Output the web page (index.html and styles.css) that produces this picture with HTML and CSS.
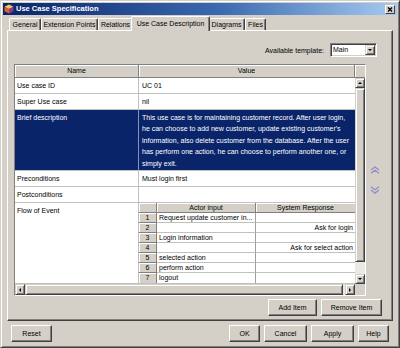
FILE: index.html
```html
<!DOCTYPE html>
<html>
<head>
<meta charset="utf-8">
<title>Use Case Specification</title>
<link rel="stylesheet" href="styles.css">
</head>
<body>
<div class="window">
  <div class="titlebar">
    <svg class="app-icon" viewBox="0 0 10 10" width="10" height="10">
      <path d="M5 0.5 L9.5 2.8 L5 5 L0.5 2.8Z" fill="#f6c65a"/>
      <path d="M0.5 2.8 L5 5 L5 9.6 L0.5 7.3Z" fill="#e2612b"/>
      <path d="M9.5 2.8 L5 5 L5 9.6 L9.5 7.3Z" fill="#8e3b86"/>
    </svg>
    <span class="title">Use Case Specification</span>
    <span class="close">
      <svg viewBox="0 0 10 9" width="10" height="9"><path d="M3 2.5 L7 6.5 M7 2.5 L3 6.5" stroke="#000" stroke-width="1.3"/></svg>
    </span>
  </div>

  <div class="tabs">
    <div class="tab t-general">General</div>
    <div class="tab t-ext">Extension Points</div>
    <div class="tab t-rel">Relations</div>
    <div class="tab tab-active t-desc">Use Case Description</div>
    <div class="tab t-diag">Diagrams</div>
    <div class="tab t-files">Files</div>
  </div>

  <div class="panel">
    <div class="template-row">
      <span class="template-label">Available template:</span>
      <div class="combo">
        <span class="combo-text">Main</span>
        <span class="sb-btn combo-btn"><span class="tri tri-down"></span></span>
      </div>
    </div>

    <div class="main">
      <div class="grid">
        <div class="grid-head">
          <div class="hcell h-name">Name</div>
          <div class="hcell h-value">Value</div>
          <div class="hcell h-corner"></div>
        </div>
        <div class="grid-body">
          <div class="rows">
            <div class="row">
              <div class="cell-name">Use case ID</div>
              <div class="cell-value">UC 01</div>
            </div>
            <div class="row">
              <div class="cell-name">Super Use case</div>
              <div class="cell-value">nil</div>
            </div>
            <div class="row row-brief selected">
              <div class="cell-name">Brief description</div>
              <div class="cell-value">This use case is for maintaining customer record. After user login, he can choose to add new customer, update existing customer's information, also delete customer from the database. After the user has perform one action, he can choose to perform another one, or simply exit.</div>
            </div>
            <div class="row">
              <div class="cell-name">Preconditions</div>
              <div class="cell-value">Must login first</div>
            </div>
            <div class="row">
              <div class="cell-name">Postconditions</div>
              <div class="cell-value"></div>
            </div>
            <div class="row row-flow">
              <div class="cell-name">Flow of Event</div>
              <div class="flow">
                <div class="flow-head">
                  <div class="fh fh-num"></div>
                  <div class="fh fh-col">Actor input</div>
                  <div class="fh fh-col">System Response</div>
                </div>
                <div class="flow-row"><div class="fnum">1</div><div class="fa">Request update customer in...</div><div class="fs"></div></div>
                <div class="flow-row"><div class="fnum">2</div><div class="fa"></div><div class="fs">Ask for login</div></div>
                <div class="flow-row"><div class="fnum">3</div><div class="fa">Login information</div><div class="fs"></div></div>
                <div class="flow-row"><div class="fnum">4</div><div class="fa"></div><div class="fs">Ask for select action</div></div>
                <div class="flow-row"><div class="fnum">5</div><div class="fa">selected action</div><div class="fs"></div></div>
                <div class="flow-row"><div class="fnum">6</div><div class="fa">perform action</div><div class="fs"></div></div>
                <div class="flow-row last"><div class="fnum">7</div><div class="fa">logout</div><div class="fs"></div></div>
              </div>
            </div>
          </div>
          <div class="vscroll">
            <span class="sb-btn"><span class="tri tri-up"></span></span>
            <span class="sb-thumb v-thumb"></span>
            <span class="sb-track"></span>
            <span class="sb-btn"><span class="tri tri-down"></span></span>
          </div>
        </div>
        <div class="grid-foot">
          <div class="hscroll">
            <span class="sb-btn h-btn"><span class="tri tri-left"></span></span>
            <span class="sb-thumb h-thumb"></span>
            <span class="sb-btn h-btn"><span class="tri tri-right"></span></span>
          </div>
          <div class="corner"></div>
        </div>
      </div>

      <div class="side">
        <svg class="chev" viewBox="0 0 10 8" width="10" height="8"><path d="M1 4 L5 1 L9 4 M1 7.3 L5 4.3 L9 7.3" fill="none" stroke="#8f8fc6" stroke-width="1.4"/></svg>
        <svg class="chev" viewBox="0 0 10 8" width="10" height="8"><path d="M1 0.7 L5 3.7 L9 0.7 M1 4 L5 7 L9 4" fill="none" stroke="#8f8fc6" stroke-width="1.4"/></svg>
      </div>
    </div>

    <div class="item-buttons">
      <span class="btn b-add">Add Item</span>
      <span class="btn b-remove">Remove Item</span>
    </div>
  </div>

  <div class="footer">
    <span class="btn b-reset">Reset</span>
    <div class="footer-right">
      <span class="btn b-ok">OK</span>
      <span class="btn b-cancel">Cancel</span>
      <span class="btn b-apply">Apply</span>
      <span class="btn b-help">Help</span>
    </div>
  </div>
</div>
</body>
</html>
```

FILE: styles.css
```css
* { box-sizing: border-box; }
html, body { margin: 0; padding: 0; }
body {
  width: 400px;
  height: 348px;
  overflow: hidden;
  background: #d4d0c8;
  font-family: "Liberation Sans", Arial, sans-serif;
  font-size: 7px;
  color: #000;
}

.window {
  width: 400px;
  height: 348px;
  border: 1px solid;
  border-color: #d4d0c8 #404040 #404040 #d4d0c8;
  box-shadow: inset 1px 1px #fff, inset -1px -1px #808080;
  padding: 2px;
  display: flex;
  flex-direction: column;
}

/* title bar */
.titlebar {
  height: 12px;
  display: flex;
  align-items: center;
  padding: 0 2px 0 1px;
  background: linear-gradient(90deg, #0a246a 0%, #3a6ab0 55%, #a6caf0 100%);
}
.app-icon { margin-right: 2px; flex: none; }
.title {
  color: #fff;
  font-weight: bold;
  font-size: 7.5px;
  line-height: 12px;
}
.close {
  margin-left: auto;
  width: 10px;
  height: 9px;
  background: #d4d0c8;
  border: 1px solid;
  border-color: #fff #404040 #404040 #fff;
  display: flex;
  align-items: center;
  justify-content: center;
}
.close svg { display: block; flex: none; }

/* tabs */
.tabs {
  margin-top: 1px;
  height: 14px;
  padding-left: 6px;
  display: flex;
  align-items: flex-end;
}
.tab {
  height: 12px;
  line-height: 11px;
  text-align: center;
  white-space: nowrap;
  border-top: 1px solid #fff;
  border-left: 1px solid #fff;
  border-right: 1px solid #404040;
  box-shadow: inset -1px 0 #808080;
  border-radius: 2px 2px 0 0;
  background: #d4d0c8;
}
.tab-active {
  height: 15px;
  line-height: 12px;
  padding-top: 1px;
  margin: 0 -2px -1px;
  position: relative;
  z-index: 1;
}
.t-general { width: 32px; }
.t-ext { width: 57px; }
.t-rel { width: 35px; }
.t-desc { width: 79px; }
.t-diag { width: 37px; }
.t-files { width: 21px; }

/* panel */
.panel {
  margin: 0 4px;
  border: 1px solid;
  border-color: #fff #404040 #404040 #fff;
  box-shadow: inset -1px -1px #808080;
  padding: 12px 0 4px 6px;
}
.template-row {
  height: 14px;
  display: flex;
  justify-content: flex-end;
  align-items: center;
  padding-right: 15px;
}
.template-label { margin-right: 6px; }
.combo {
  width: 47px;
  height: 14px;
  background: #fff;
  border: 1px solid;
  border-color: #808080 #fff #fff #808080;
  box-shadow: inset 1px 1px #404040, inset -1px -1px #d4d0c8;
  padding: 1px 1px 1px 1px;
  display: flex;
  align-items: center;
}
.combo-text { flex: 1; padding-left: 1px; line-height: 10px; }
.combo-btn { width: 11px; height: 10px; }

.main {
  margin-top: 7px;
  display: flex;
}

/* grid */
.grid {
  width: 352px;
  height: 232px;
  border: 1px solid;
  border-color: #808080 #fff #fff #808080;
  background: #fff;
  display: flex;
  flex-direction: column;
}
.grid-head { display: flex; height: 13px; }
.hcell {
  background: #d4d0c8;
  border-right: 1px solid #808080;
  border-bottom: 1px solid #808080;
  box-shadow: inset 1px 1px #fff;
  text-align: center;
  line-height: 12px;
}
.h-name { width: 124px; }
.h-value { width: 216px; }
.h-corner { width: 10px; border-right: 0; }

.grid-body { display: flex; height: 206px; }
.rows { width: 340px; }
.row {
  display: flex;
  height: 16px;
  border-bottom: 1px solid #c0c0c0;
}
.cell-name {
  width: 124px;
  flex: none;
  border-right: 1px solid #c0c0c0;
  padding: 0 2px;
  line-height: 15px;
  white-space: nowrap;
}
.cell-value {
  flex: 1;
  padding: 0 3px;
  line-height: 15px;
  white-space: nowrap;
}
.row-brief { height: 61px; }
.row-brief .cell-name,
.row-brief .cell-value {
  padding-top: 2px;
  line-height: 11.4px;
  white-space: normal;
}
.selected { background: #0a246a; color: #fff; }
.selected .cell-name { border-right-color: #8a92b0; }
.row-flow { height: 81px; }

/* inner flow table */
.flow { width: 216px; display: flex; flex-direction: column; }
.flow-head { display: flex; height: 10px; }
.fh {
  background: #d4d0c8;
  border-right: 1px solid #808080;
  border-bottom: 1px solid #808080;
  box-shadow: inset 1px 1px #fff;
  text-align: center;
  line-height: 9px;
}
.fh-num { width: 18px; }
.fh-col { width: 99px; }
.flow-head .fh-col:last-child { border-right: 0; }
.flow-row { display: flex; height: 10px; }
.fnum {
  width: 18px;
  background: #d4d0c8;
  border-right: 1px solid #808080;
  border-bottom: 1px solid #808080;
  box-shadow: inset 1px 1px #fff;
  text-align: center;
  line-height: 9px;
}
.fa, .fs {
  width: 99px;
  border-bottom: 1px solid #c0c0c0;
  padding: 0 2px;
  line-height: 9px;
  white-space: nowrap;
  overflow: hidden;
}
.fa { border-right: 1px solid #a0a0a0; }
.fs { text-align: right; }
.flow-row.last .fa,
.flow-row.last .fs { border-bottom: 0; }
.flow-row.last .fnum { border-bottom: 0; height: 10px; }

/* scrollbars */
.vscroll {
  width: 10px;
  display: flex;
  flex-direction: column;
}
.sb-btn {
  width: 10px;
  height: 10px;
  flex: none;
  background: #d4d0c8;
  border: 1px solid;
  border-color: #d4d0c8 #404040 #404040 #d4d0c8;
  box-shadow: inset 1px 1px #fff, inset -1px -1px #808080;
  display: flex;
  align-items: center;
  justify-content: center;
}
.sb-thumb {
  background: #d4d0c8;
  border: 1px solid;
  border-color: #d4d0c8 #404040 #404040 #d4d0c8;
  box-shadow: inset 1px 1px #fff, inset -1px -1px #808080;
}
.v-thumb { height: 174px; flex: none; }
.sb-track { flex: 1; background: #ebe9e4; }
.tri { width: 0; height: 0; border: 2px solid transparent; }
.tri-up { border-bottom: 2px solid #000; border-top: 0; border-left-width: 2.5px; border-right-width: 2.5px; }
.tri-down { border-top: 2px solid #000; border-bottom: 0; border-left-width: 2.5px; border-right-width: 2.5px; }
.tri-left { border-right: 2px solid #000; border-left: 0; border-top-width: 2.5px; border-bottom-width: 2.5px; }
.tri-right { border-left: 2px solid #000; border-right: 0; border-top-width: 2.5px; border-bottom-width: 2.5px; }

.grid-foot { display: flex; height: 11px; }
.hscroll {
  width: 340px;
  display: flex;
  background: #ebe9e4;
}
.h-btn { height: 11px; }
.h-thumb { flex: 1; margin-right: 2px; }
.corner { width: 10px; background: #d4d0c8; }

/* side arrows */
.side {
  flex: 1;
  display: flex;
  flex-direction: column;
  justify-content: center;
  align-items: flex-start;
  padding-left: 4px;
  gap: 12px;
}
.chev { display: block; }

/* buttons */
.btn {
  display: flex;
  align-items: center;
  justify-content: center;
  height: 17px;
  background: #d4d0c8;
  border: 1px solid;
  border-color: #fff #404040 #404040 #fff;
  box-shadow: inset -1px -1px #808080;
  white-space: nowrap;
}
.item-buttons {
  margin-top: 3px;
  display: flex;
  justify-content: flex-end;
  gap: 4px;
  padding-right: 10px;
}
.b-add { width: 49px; }
.b-remove { width: 61px; }

.footer {
  margin-top: 4px;
  padding: 0 8px;
  display: flex;
  justify-content: space-between;
}
.footer-right { display: flex; gap: 4px; }
.b-reset { width: 41px; }
.b-ok { width: 31px; }
.b-cancel { width: 43px; }
.b-apply { width: 43px; }
.b-help { width: 31px; }
```
